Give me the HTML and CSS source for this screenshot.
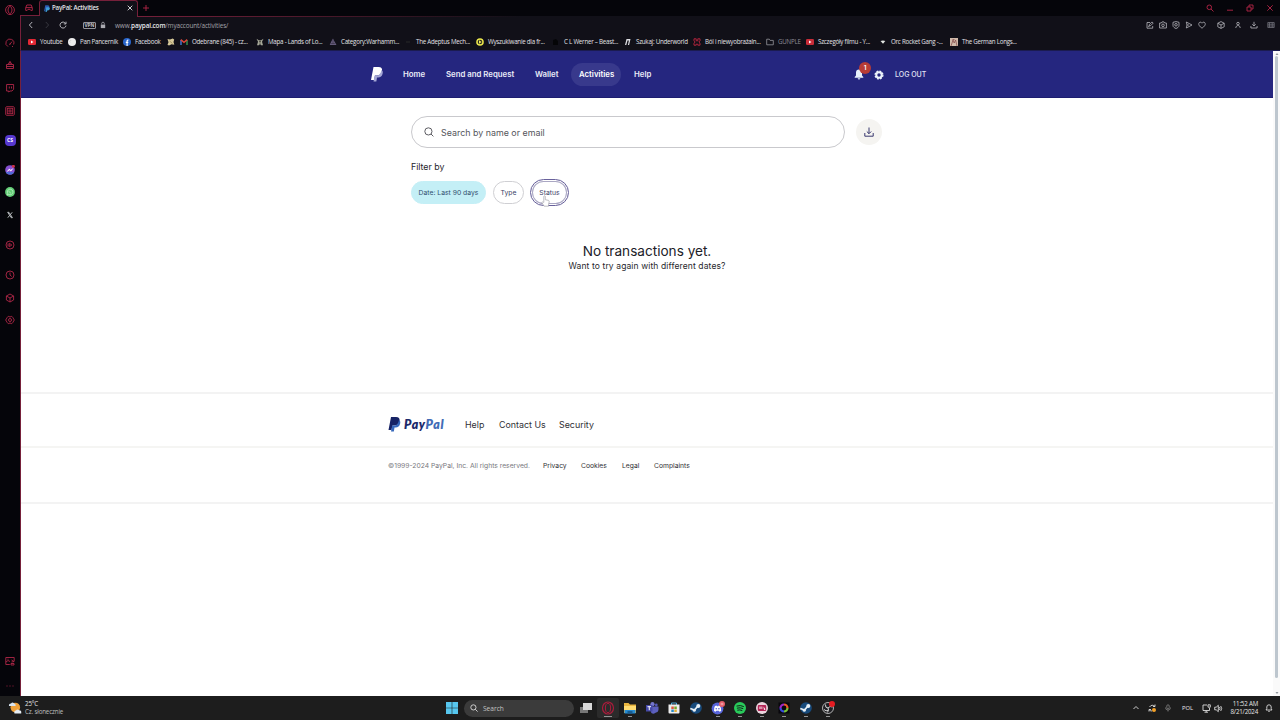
FILE: index.html
```html
<!DOCTYPE html>
<html lang="en">
<head>
    <meta charset="UTF-8">
    <meta name="viewport" content="width=device-width, initial-scale=1.0">
    <title>PayPal: Activities</title>
    <link rel="stylesheet" href="styles.css">
</head>
<body>

<div class="desktop">
    <div class="browser">
        <!-- Browser sidebar -->
        <aside class="sidebar">
            <svg viewBox="0 0 10 10"><ellipse cx="5" cy="5" rx="4.4" ry="4.6"/><ellipse cx="5" cy="5" rx="2" ry="3.5"/></svg>
            <svg viewBox="0 0 10 10"><path d="M3 8.6A4 4 0 1 1 8.6 6.5M5 6.2L7 3.6M4 6.2h1.6M7 8.5h1"/></svg>
            <svg viewBox="0 0 10 10"><path d="M1.5 4.5h7v4h-7zM3 4.5l2-3 2 3M1.5 6.5h7M5 1.5v3"/></svg>
            <svg viewBox="0 0 10 10"><path d="M1.6 1.5h7v4.8L7 8H5L3.7 9V8H1.6zM4.3 3.5v2M6.5 3.5v2"/></svg>
            <svg viewBox="0 0 10 10"><rect x=".7" y=".7" width="8.6" height="8.6" rx="1"/><rect x="2.3" y="2.3" width="5.4" height="5.4"/><rect x="4" y="4" width="2" height="2"/></svg>
            <span class="cs-badge">CS</span>
            <svg class="fill" viewBox="0 0 10 10"><circle cx="5" cy="5" r="4.8" fill="#8750d2"/><path d="M.8 7A4.8 4.8 0 0 0 9 7.3z" fill="#496ed8"/><path d="M2.3 6.4L4.2 4l1.6 1.2L7.7 3.7 6 6.1 4.4 5z" stroke="#fff" stroke-width=".5" fill="#fff"/><circle cx="8.4" cy="1.3" r="1.5" fill="#ce3349"/></svg>
            <svg class="fill" viewBox="0 0 10 10"><circle cx="5" cy="5" r="4.9" fill="#64cf77"/><path d="M2.2 8l.5-1.6a2.8 2.8 0 1 1 1 1z" fill="none" stroke="#c4efcb" stroke-width=".7"/><path d="M3.9 3.9c.1 1.1 1 2 2.1 2.2" fill="none" stroke="#c4efcb" stroke-width=".7"/></svg>
            <svg class="fill" viewBox="0 0 10 10"><rect width="10" height="10" rx="1.5" fill="#050608"/><path d="M2.7 2.3h1.2l3.5 5.4H6.2zM7.2 2.3L5.4 4.5M4.5 5.5L2.8 7.7" fill="none" stroke="#e1e5e8" stroke-width=".8"/></svg>
            <svg viewBox="0 0 10 10"><circle cx="5" cy="5" r="4"/><path d="M4.3 3.3L6.8 5 4.3 6.7zM3 3.5v3"/></svg>
            <svg viewBox="0 0 10 10"><circle cx="5" cy="5" r="4"/><path d="M5 2.5V5l1.7 1.5"/></svg>
            <svg viewBox="0 0 10 10"><path d="M5 1l3.6 2v4L5 9 1.4 7V3zM1.4 3L5 5l3.6-2M5 5v4"/></svg>
            <svg viewBox="0 0 10 10"><path d="M3.3 1.3L5 2l1.7-.7 1.1 1.2 1.5 2.5-1.5 2.5-1.1 1.2L5 8l-1.7.7-1.1-1.200L.7 5l1.500-2.500z"/><circle cx="5" cy="5" r="1.5"/></svg>
            <svg viewBox="0 0 10 10"><path d="M.8 1.5h8.4v4M.8 1.5v7h4M1 6l2-1.500 2 1M2.500 3.200h1M6.500 4L9 5.600 6.500 6M6 7.500h3v1.500H6z"/></svg>
            <svg viewBox="0 0 10 10"><path d="M1.500 5h1M4.500 5h1M7.500 5h1"/></svg>
        </aside>

        <div class="window">
            <!-- Tab strip -->
            <div class="tab-strip">
                <div class="tab-group">
                    <svg class="pink" viewBox="0 0 8 8"><path d="M1.8 1h4.4l1.1 2.8v2.6H5.8L5 5.3H3l-.8 1.1H.7V3.8zM.8 3.6h6.4"/></svg>
                </div>
                <div class="tab">
                    <svg class="tab-logo" viewBox="0 0 24 28"><path d="M5 1h10c5 0 7 3 6 8s-5 8-10 8H7L5 25H0z" fill="#2c5bb0"/><path d="M9 9h11c3 1 4 4 3 7s-4 6-8 6h-3l-1 6H6z" fill="#3e9ed7"/></svg>
                    <span class="tab-title">PayPal: Activities</span>
                    <svg class="tab-close" viewBox="0 0 8 8"><path d="M1.7 1.7l4.6 4.6M6.3 1.7L1.7 6.3"/></svg>
                </div>
                <svg class="new-tab pink" viewBox="0 0 8 8"><path d="M4 1v6M1 4h6"/></svg>
                <div class="window-buttons">
                    <svg class="pink" viewBox="0 0 8 8"><circle cx="3.3" cy="3.3" r="2.3"/><path d="M5 5l2.5 2.5"/></svg>
                    <svg class="pink" viewBox="0 0 8 8"><path d="M1 6.2h6"/></svg>
                    <svg class="pink" viewBox="0 0 8 8"><path d="M1 3h4v4H1zM3 3V1h4v4H5"/></svg>
                    <svg class="pink" viewBox="0 0 8 8"><path d="M1.3 1.3l5.4 5.4M6.7 1.3L1.3 6.7"/></svg>
                </div>
            </div>

            <!-- Address bar -->
            <div class="address-bar">
                <svg class="nav" viewBox="0 0 8 8"><path d="M5.2 1L2.4 4l2.8 3"/></svg>
                <svg class="nav dim" viewBox="0 0 8 8"><path d="M2.8 1l2.8 3-2.8 3"/></svg>
                <svg class="nav reload" viewBox="0 0 8 8"><path d="M6.6 2.5A3 3 0 1 0 7 4.6M7 .7v2.2H4.8"/></svg>
                <span class="vpn">VPN</span>
                <svg class="lock" viewBox="0 0 6 8"><path d="M.8 3.6h4.4v3.5H.8z" fill="#aaaab0"/><path d="M1.7 3.5v-1a1.3 1.3 0 0 1 2.6 0v1" fill="none" stroke="#aaaab0" stroke-width=".8"/></svg>
                <span class="url">www.<b>paypal.com</b>/myaccount/activities/</span>
                <div class="toolbar">
                    <svg viewBox="0 0 8 8"><path d="M4 1.5H1v5.7h5.7V5M3 5l.5-1.6L6 .9l1.2 1.2-2.5 2.5zM2.2 6l1-1"/></svg>
                    <svg viewBox="0 0 8 8"><path d="M.6 2h1.7L3 .9h2L5.7 2h1.7v5H.6z"/><circle cx="4" cy="4.3" r="1.3"/></svg>
                    <svg viewBox="0 0 8 8"><path d="M1 1.3l3-.7 3 .7v3.3C7 6 5.4 7 4 7.5 2.6 7 1 6 1 4.6z"/><circle cx="4" cy="3.8" r="1.3"/></svg>
                    <svg viewBox="0 0 8 8"><path d="M1.3 1L7 4 1.3 7l.7-3zM2 4h2"/></svg>
                    <svg viewBox="0 0 8 8"><path d="M4 7.2C1.5 5.4.5 4 .8 2.5 1.2.8 3.2.7 4 2.2 4.8.7 6.8.8 7.2 2.5 7.5 4 6.5 5.4 4 7.2z"/></svg>
                    <svg viewBox="0 0 8 8"><path d="M4 .6l3.2 1.6v3.6L4 7.4.8 5.8V2.2zM.8 2.2L4 4l3.2-1.8M4 4v3.4"/></svg>
                    <svg viewBox="0 0 8 8"><circle cx="4" cy="2.6" r="1.3"/><path d="M1.8 7c.1-3.3 4.3-3.3 4.4 0"/></svg>
                    <svg viewBox="0 0 8 8"><path d="M4 .8v4M2.3 3.3L4 5l1.7-1.7M.9 5v2h6.2V5"/></svg>
                    <svg class="dim" viewBox="0 0 8 8"><path d="M.8 1.5h6.4v5H.8zM2.5 1.5v5M.8 3.2h6.4M.8 5h6.4M5.2 1.5v5"/></svg>
                </div>
            </div>

            <!-- Bookmarks -->
            <div class="bookmarks">
                <div class="bookmark"><svg viewBox="0 0 8 8"><rect y="1" width="8" height="6" rx="1.3" fill="#e22834"/><path d="M3 2.5L5.5 4 3 5.5z" fill="#fff"/></svg><span>Youtube</span></div>
                <div class="bookmark"><svg viewBox="0 0 8 8"><circle cx="4" cy="4" r="4" fill="#ececec"/><path d="M2 1.8l1 1M1.5 3.5l1 .6" stroke="#aaa" stroke-width=".5"/></svg><span>Pan Pancernik</span></div>
                <div class="bookmark"><svg viewBox="0 0 8 8"><circle cx="4" cy="4" r="4" fill="#2865cb"/><path d="M4.1 8V3q0-1 1.3-.9M2.8 4.4h2.5" fill="none" stroke="#fff" stroke-width="1.1"/></svg><span>Facebook</span></div>
                <div class="bookmark"><svg viewBox="0 0 8 8"><path d="M.5 1l2.5.6L5.7.5l1.500 1L6.500 4l.8 2.700-2.700-.4L2 7.500.5 6.700l1-2.500z" fill="#d6c899"/><path d="M2.500 3l3 2.500" stroke="#75602e" stroke-width=".5"/></svg></div>
                <div class="bookmark"><svg viewBox="0 0 8 8"><path d="M1 7V2" stroke="#4b83e5" stroke-width="1.3"/><path d="M7 7V2" stroke="#38a455" stroke-width="1.3"/><path d="M.8 1.6L4 4.3l3.2-2.7" fill="none" stroke="#df4639" stroke-width="1.4"/></svg><span>Odebrane (845) - cz...</span></div>
                <div class="bookmark"><svg viewBox="0 0 8 8"><path d="M.5.7l2.4 1.6h2.2L7.5.7 6 3.7l1 3.5H5L4 6 3 7.2H1l1-3.5z" fill="#a6a898"/><path d="M3 3.5h2M4 2.5v4" stroke="#24251f" stroke-width=".5"/></svg><span>Mapa - Lands of Lo...</span></div>
                <div class="bookmark"><svg viewBox="0 0 8 8"><path d="M4 .6l1.2 2.3L7.5 7H.7l1.8-4z" fill="#655b7a"/><path d="M4 2v4M2 5.5h4" stroke="#312b3e" stroke-width=".5"/></svg><span>Category:Warhamm...</span></div>
                <div class="bookmark"><svg viewBox="0 0 8 8"><path d="M2 4h4" stroke="#1c1c20" stroke-width="2"/></svg><span>The Adeptus Mech...</span></div>
                <div class="bookmark"><svg viewBox="0 0 8 8"><circle cx="4" cy="4" r="3.8" fill="#ece84c"/><circle cx="4" cy="4" r="2.3" fill="#26241d"/><path d="M3 2.2L5.700 4 3 5.800z" fill="#f0ec62"/></svg><span>Wyszukiwanie dla fr...</span></div>
                <div class="bookmark"><svg viewBox="0 0 8 8"><path d="M1 2l3-1 2 2v4H1z" fill="#050507"/></svg><span>C L Werner – Beast...</span></div>
                <div class="bookmark"><svg viewBox="0 0 8 8"><path d="M1 7L2.500 1h4L5.100 7H3.900l1-4.500H3.500L2.300 7z" fill="#dedee2"/></svg><span>Szukaj: Underworld</span></div>
                <div class="bookmark"><svg viewBox="0 0 8 8"><path d="M1 .8h2.2v2h1.6v-2H7v2L5.8 4 7 5.2v2H4.8v-1H3.2v1H1v-2L2.2 4 1 2.800z" fill="none" stroke="#af243c"/></svg><span>Ból i niewyobrażaln...</span></div>
                <div class="bookmark folder"><svg viewBox="0 0 8 8"><path d="M.7 6.8V1.2h2.6l.8 1.2h3.2v4.4z" fill="none" stroke="#96969c" stroke-width=".8"/></svg><span>GUNPLE</span></div>
                <div class="bookmark"><svg viewBox="0 0 8 8"><rect y="1" width="8" height="6" rx="1.3" fill="#c92c38"/><path d="M3 2.5L5.5 4 3 5.5z" fill="#fff"/></svg><span>Szczegóły filmu - Y...</span></div>
                <div class="bookmark"><svg viewBox="0 0 8 8"><path d="M1.5 3Q4 1.8 6.3 3L4 5.8z" fill="#e3e7e3"/></svg><span>Orc Rocket Gang -...</span></div>
                <div class="bookmark"><svg viewBox="0 0 8 8"><path d="M0 0h8v8H0z" fill="#cfb9aa"/><path d="M1 8l2-6 1.2 3L5.6 2 7 8M2.5 1.5h2" fill="none" stroke="#7f4545" stroke-width=".7"/></svg><span>The German Longs...</span></div>
            </div>

            <!-- PayPal page -->
            <div class="viewport">
                <div class="page">
                    <header class="site-header">
                        <svg class="logo-mark" viewBox="0 0 24 30"><path d="M5 0h10c5.5 0 8 3 7 8-1 6-5 9-11 9H8L6 26H0z" fill="#fff"/><path d="M21 6c3 2 3 5 2 8-1 4-4 7-9 7h-2l-1.3 8H5l2.4-12h4.2c5 0 8.4-4 9.4-11z" fill="#a4a6d5"/></svg>
                        <nav class="main-nav">
                            <a class="nav-home">Home</a>
                            <a class="nav-send">Send and Request</a>
                            <a class="nav-wallet">Wallet</a>
                            <a class="nav-activities">Activities</a>
                            <a class="nav-help">Help</a>
                        </nav>
                        <div class="bell">
                            <svg viewBox="0 0 10 11"><path d="M5 .5a3 3 0 0 0-3 3v3L.7 8v.8h8.6V8L8 6.5v-3a3 3 0 0 0-3-3zM3.7 9.3h2.6a1.3 1.2 0 0 1-2.6 0z" fill="#e6f0fb"/></svg>
                            <span class="count">1</span>
                        </div>
                        <svg class="gear" viewBox="0 0 10 10"><circle cx="5" cy="5" r="2.7" fill="none" stroke="#ecf3fb" stroke-width="2"/><circle cx="5" cy="5" r="3.9" fill="none" stroke="#ecf3fb" stroke-width="1.3" stroke-dasharray="1.9 1.16"/></svg>
                        <a class="logout">LOG OUT</a>
                    </header>

                    <main class="activities">
                        <div class="search-row">
                            <div class="search-box">
                                <svg viewBox="0 0 10 10"><circle cx="4.4" cy="4.4" r="3.6"/><path d="M7 7l2.4 2.4"/></svg>
                                <span>Search by name or email</span>
                            </div>
                            <div class="download">
                                <svg viewBox="0 0 10 10"><path d="M5 .5v6M2.8 4.500L5 6.700l2.200-2.200M.8 6v3.200h8.400V6"/></svg>
                            </div>
                        </div>
                        <div class="filter-label">Filter by</div>
                        <div class="filters">
                            <span class="chip chip-date">Date: Last 90 days</span>
                            <span class="chip chip-type">Type</span>
                            <span class="chip chip-status">Status
                                <svg class="cursor" viewBox="0 0 9 12"><path d="M2.8 7V1.3q.8-1 1.500 0v3.400l3.200.7q.8.3.7 1.200L7.500 10v1.200H3.200L.8 7.600q.6-1.200 2-.2z"/></svg>
                            </span>
                        </div>
                        <div class="empty">
                            <h1>No transactions yet.</h1>
                            <p>Want to try again with different dates?</p>
                        </div>
                    </main>

                    <footer class="site-footer">
                        <div class="footer-top">
                            <svg class="footer-mark" viewBox="0 0 24 30"><path d="M5 0h10c5.5 0 8 3 7 8-1 6-5 9-11 9H8L6 26H0z" fill="#172365"/><path d="M21 6c3 2 3 5 2 8-1 4-4 7-9 7h-2l-1.3 8H5l2.4-12h4.2c5 0 8.4-4 9.4-11z" fill="#3768bb"/></svg>
                            <span class="wordmark">Pay<i>Pal</i></span>
                            <a class="f-help">Help</a>
                            <a class="f-contact">Contact Us</a>
                            <a class="f-security">Security</a>
                        </div>
                        <div class="footer-bottom">
                            <span class="copyright">©1999-2024 PayPal, Inc. All rights reserved.</span>
                            <a class="f-privacy">Privacy</a>
                            <a class="f-cookies">Cookies</a>
                            <a class="f-legal">Legal</a>
                            <a class="f-complaints">Complaints</a>
                        </div>
                    </footer>
                </div>
                <div class="scrollbar">
                    <svg viewBox="0 0 6 4"><path d="M1.5 3L3 1l1.5 2z"/></svg>
                    <div class="thumb"></div>
                    <svg viewBox="0 0 6 4"><path d="M1.5 1L3 3l1.5-2z"/></svg>
                </div>
            </div>
        </div>
    </div>

    <!-- Windows taskbar -->
    <div class="taskbar">
        <div class="weather">
            <svg viewBox="0 0 14 14"><circle cx="7.3" cy="6.5" r="4.8" fill="#f0a23a"/><path d="M1 5q-.5-2.5 2-2.6Q4.5.4 6.2 2.6 8 3 7.6 5z" fill="#d9e5f0"/><path d="M6.5 12.5q-1-2.6 1.5-2.900 1.200-2.200 3.200-.3 2.600.1 2 3.200z" fill="#e6edf4"/></svg>
            <div class="weather-text"><span>25°C</span><span class="muted">Cz. słonecznie</span></div>
        </div>
        <div class="apps">
            <svg class="start" viewBox="0 0 12 12"><path d="M0 0h5.7v5.7H0zM6.3 0H12v5.7H6.3zM0 6.3h5.7V12H0zM6.3 6.3H12V12H6.3z" fill="#57c7ef"/></svg>
            <div class="task-search">
                <svg viewBox="0 0 8 8"><circle cx="3.4" cy="3.4" r="2.6"/><path d="M5.3 5.3l2.3 2.3"/></svg>
                <span>Search</span>
            </div>
            <div class="app"><svg viewBox="0 0 14 14"><path d="M1 6h8v6H1z" fill="#777"/><path d="M4 2h9v7H4z" fill="#d9d9d9"/></svg></div>
            <div class="app current"><svg viewBox="0 0 14 14"><ellipse cx="7" cy="7" rx="5.5" ry="6" fill="none" stroke="#a91c3b" stroke-width="1.2"/><ellipse cx="7" cy="7" rx="2.6" ry="4.6" fill="none" stroke="#a91c3b"/></svg></div>
            <div class="app open"><svg viewBox="0 0 14 14"><path d="M1 2h4.5L7 3.5h6V12H1z" fill="#e9b53f"/><path d="M1 5h12v4H1z" fill="#ffdc72"/><path d="M1.5 9h11v3.5h-11z" fill="#268bd2"/><path d="M4.5 10h5v2.5h-5z" fill="#195c91"/></svg></div>
            <div class="app"><svg viewBox="0 0 14 14"><circle cx="7.5" cy="3.2" r="2.1" fill="#7476ce"/><circle cx="11.3" cy="4" r="1.4" fill="#5559b8"/><path d="M5 5.5h8.5v3q-.3 3-2.5 3Q9 13.5 6.3 12z" fill="#5c60bd"/><path d="M1 4h6.5v6.5H1z" fill="#4549a8"/><path d="M2.5 5.7H6M4.25 5.7v3.5" stroke="#fff"/></svg></div>
            <div class="app"><svg viewBox="0 0 14 14"><path d="M4.5 4V2h5v2" fill="none" stroke="#4ba9d9"/><path d="M1.5 3.5h11v8q0 1-1 1h-9q-1 0-1-1z" fill="#eee"/><path d="M4.3 5.5h2.5V8H4.3z" fill="#dd563b"/><path d="M7.3 5.5h2.5V8H7.3z" fill="#73aa2e"/><path d="M4.3 8.5h2.5V11H4.3z" fill="#298bc8"/><path d="M7.3 8.5h2.5V11H7.3z" fill="#e4ad34"/></svg></div>
            <div class="app"><svg viewBox="0 0 14 14"><circle cx="7" cy="7" r="5.8" fill="#174a7b"/><path d="M1.3 7.5L5.5 9l3-3.5" fill="none" stroke="#e8f0f6" stroke-width="1.8"/><circle cx="9.3" cy="5" r="2" fill="#e8f0f6"/><circle cx="5.3" cy="9.3" r="1.5" fill="#e8f0f6"/></svg></div>
            <div class="app open"><svg viewBox="0 0 14 14"><circle cx="6.5" cy="7.5" r="5.9" fill="#5865da"/><path d="M3 10q0-4 1-5l1.5-.5.5.8h1.2l.5-.8L9 5q1.200 1.500 1.200 5l-1.700.7-.7-1H5.300l-.7 1z" fill="#fff"/><circle cx="5.3" cy="7.8" r=".8" fill="#5865da"/><circle cx="7.9" cy="7.8" r=".8" fill="#5865da"/><circle cx="11" cy="3" r="3" fill="#e45d69"/><path d="M9.5 3h3M11 1.7v2.6" stroke="#f5b7bd" stroke-width=".8"/></svg></div>
            <div class="app open"><svg viewBox="0 0 14 14"><circle cx="7" cy="7" r="6" fill="#29cb5b"/><path d="M3.5 5.1q4-1.3 7.3.5M3.9 7.2q3.4-1 6.3.4M4.3 9.2q2.6-.8 5 .4" fill="none" stroke="#122119"/></svg></div>
            <div class="app open"><svg viewBox="0 0 14 14"><circle cx="7" cy="7" r="6" fill="#ead6de"/><rect x="2.8" y="4" width="8.4" height="6" rx="1" fill="#b42455"/><path d="M4 5.5h3.500V8H4z" fill="#d890aa"/><path d="M8.500 5.500l2 3-1.500.5z" fill="#fff"/></svg></div>
            <div class="app open"><svg viewBox="0 0 14 14"><path d="M1.5 1.5h11v11h-11z" fill="#08070c"/><path d="M7 3.500A3.500 3.500 0 0 1 10.500 7" fill="none" stroke="#e85b28" stroke-width="2.2"/><path d="M10.500 7A3.500 3.500 0 0 1 7 10.500" fill="none" stroke="#79bf35" stroke-width="2.2"/><path d="M7 10.500A3.500 3.500 0 0 1 3.500 7" fill="none" stroke="#374bdd" stroke-width="2.2"/><path d="M3.500 7A3.500 3.500 0 0 1 7 3.500" fill="none" stroke="#a026c0" stroke-width="2.2"/></svg></div>
            <div class="app open"><svg viewBox="0 0 14 14"><circle cx="7" cy="7" r="5.8" fill="#174a7b"/><path d="M1.3 7.5L5.5 9l3-3.5" fill="none" stroke="#e8f0f6" stroke-width="1.8"/><circle cx="9.3" cy="5" r="2" fill="#e8f0f6"/><circle cx="5.3" cy="9.3" r="1.5" fill="#e8f0f6"/></svg></div>
            <div class="app open"><svg viewBox="0 0 14 14"><circle cx="7" cy="7" r="5.5" fill="#202024" stroke="#d2d2d2" stroke-width=".8"/><path d="M7 7Q4 7 4.5 3.5M7 7q2-2.5 4.5-1M7 7q1.500 2.500-.7 4.500M3 8.500q2 2.200 4.200.8" fill="none" stroke="#d2d2d2"/><circle cx="11" cy="3" r="3" fill="#e51c22"/></svg></div>
        </div>
        <div class="tray">
            <svg class="caret" viewBox="0 0 8 8"><path d="M1.5 5L4 2.5 6.5 5"/></svg>
            <svg class="sync" viewBox="0 0 8 8"><path d="M7 2.5Q4-.3 1.5 3M7 .5v2H5M1 5.5Q2 7 4 7M1 7.500v-2h2"/><circle cx="6" cy="6" r="2" fill="#f3a127" stroke="none"/></svg>
            <svg class="mic" viewBox="0 0 8 8"><rect x="2.8" y=".8" width="2.4" height="4" rx="1.2"/><path d="M1.5 3.5q0 2.5 2.5 2.5t2.5-2.5M4 6v1.500"/></svg>
            <span class="lang">POL</span>
            <svg class="net" viewBox="0 0 9 9"><path d="M5 1H1v5.5h6.5V4M2.5 8.2H6M4.2 6.5v1.7M6 .8h2.3v2.4H6z"/></svg>
            <svg class="vol" viewBox="0 0 9 9"><path d="M.7 3.2h1.5l2.100-1.900v6.400L2.200 5.800H.7zM5.500 3q1 1.500 0 3M6.700 2q2 2.500 0 5"/></svg>
            <div class="clock"><span>11:52 AM</span><span>8/21/2024</span></div>
            <svg class="notify" viewBox="0 0 8 8"><path d="M1 6l.8-1.3V3a2.200 2.200 0 0 1 4.400 0v1.700L7 6zM3.200 7.300h1.600"/></svg>
        </div>
    </div>
</div>

</body>
</html>
```
FILE: styles.css
```css
:root {
    --chrome-bg: #111018;
    --dark: #05050a;
    --pink: #b52647;
    --line: #76203a;
    --navy: #25267f;
    --page-font: Inter, "Liberation Sans", sans-serif;
    --ui-font: "Open Sans", "Noto Sans", sans-serif;
}

* {
    box-sizing: border-box;
}

body {
    margin: 0;
    background-color: #fff;
    font-family: var(--ui-font);
    overflow: hidden;
}

svg {
    display: block;
    flex: none;
}

.desktop {
    display: flex;
    flex-direction: column;
    width: 1280px;
    height: 720px;
}

.browser {
    display: flex;
    height: 696px;
}

/* Sidebar */
.sidebar {
    display: grid;
    grid-template-rows: 33px 22px 23px 23px 29px 30px 22px 23px 30px 30px 23px 22px 341px 25px 15px;
    align-content: start;
    justify-items: center;
    width: 20px;
    padding-top: 5px;
    background-color: var(--dark);
}

.sidebar svg {
    width: 10px;
    height: 10px;
    fill: none;
    stroke: #b02747;
    stroke-width: 0.9;
}

.sidebar .fill {
    stroke: none;
}

.cs-badge {
    width: 11px;
    height: 11px;
    border-radius: 4px;
    background-color: #5638cf;
    color: #fff;
    font-size: 5px;
    font-weight: 700;
    line-height: 11px;
    text-align: center;
}

.window {
    display: flex;
    flex-direction: column;
    width: 1260px;
    background-color: var(--chrome-bg);
}

/* Tab strip */
.tab-strip {
    display: flex;
    height: 16px;
    background-color: var(--dark);
}

.tab-group {
    display: flex;
    align-items: center;
    width: 19px;
    padding-left: 5px;
    border-bottom: 1px solid var(--line);
}

.pink,
.tab-close {
    width: 8px;
    height: 8px;
    fill: none;
    stroke: var(--pink);
    stroke-width: 0.9;
}

.tab {
    display: flex;
    align-items: center;
    width: 99px;
    padding: 0 3px 1px 4px;
    border: 1px solid var(--line);
    border-bottom: none;
    border-radius: 3px 3px 0 0;
    background-color: var(--chrome-bg);
}

.tab-logo {
    width: 6px;
    height: 7px;
}

.tab-title {
    width: 82px;
    margin-left: 2px;
    color: #e4e4e8;
    font-size: 6.2px;
    font-weight: 600;
    letter-spacing: -0.2px;
    line-height: 12px;
}

.tab-close {
    stroke: #e4e4e8;
}

.new-tab {
    align-self: center;
    margin-left: 4px;
}

.window-buttons {
    display: flex;
    align-items: center;
    gap: 12px;
    margin-left: auto;
    padding-right: 6px;
}

/* The line under the tab strip fades to the right */
.address-bar {
    display: flex;
    align-items: center;
    height: 18px;
    padding-left: 6px;
    border-left: 1px solid var(--line);
    background: linear-gradient(to right, transparent 116px, var(--line) 116px, #4a182a 300px, transparent 500px) 0 0 / 100% 1px no-repeat;
}

.nav {
    width: 8px;
    height: 8px;
    margin-right: 8px;
    fill: none;
    stroke: #c6c6cc;
    stroke-width: 0.9;
}

.nav.dim {
    stroke: #3b3b43;
}

.nav.reload {
    margin-right: 16px;
}

.vpn {
    width: 13px;
    height: 7px;
    border: 1px solid #93939a;
    border-radius: 1px;
    color: #c3c3c9;
    font-size: 4.8px;
    font-weight: 700;
    line-height: 5px;
    text-align: center;
}

.lock {
    width: 6px;
    height: 8px;
    margin: 0 9px 0 4px;
}

.url {
    padding-top: 1px;
    color: #a3a3aa;
    font-size: 6.4px;
    letter-spacing: -0.12px;
    line-height: 12px;
}

.url b {
    color: #e9e9ed;
    font-weight: 600;
}

.toolbar {
    display: grid;
    grid-template-columns: 13px 13px 13px 13px 19px 17px 16px 17px 10px;
    margin-left: auto;
    padding-right: 3px;
}

.toolbar svg {
    width: 8px;
    height: 8px;
    fill: none;
    stroke: #b6b6bc;
    stroke-width: 0.8;
}

.toolbar .dim {
    stroke: #707078;
}

/* Bookmarks */
.bookmarks {
    display: grid;
    grid-template-columns: 40px 55px 44px 13px 76px 73px 75px 72px 76px 72px 69px 73px 40px 73px 71px 70px;
    height: 17px;
    padding: 0 0 1px 7px;
    border-left: 1px solid var(--line);
    border-bottom: 1px solid #1b1b50;
}

.bookmark {
    display: flex;
    align-items: center;
    gap: 4px;
    color: #e2e2e6;
    font-size: 6.2px;
    font-weight: 500;
    letter-spacing: -0.24px;
    white-space: nowrap;
}

.bookmark svg {
    width: 8px;
    height: 8px;
}

.bookmark.folder {
    color: #8e8e95;
}

/* Page viewport */
.viewport {
    display: flex;
    height: 645px;
    border-left: 1px solid var(--line);
    background-color: #fff;
}

.page {
    width: 1252px;
    font-family: var(--page-font);
}

.site-header {
    display: flex;
    align-items: center;
    height: 47px;
    padding: 1px 0 0 350px;
    border-bottom: 1px solid #1d1d70;
    background-color: var(--navy);
    color: #fff;
}

.logo-mark {
    width: 12px;
    height: 15px;
    margin-right: 12px;
}

.main-nav {
    display: flex;
    align-items: center;
    width: 459px;
    font-size: 7.8px;
    font-weight: 600;
    line-height: 23px;
    color: #e9ebf8;
}

.main-nav a {
    padding: 0 8px;
    white-space: nowrap;
}

.nav-home {
    width: 43px;
}

.nav-send {
    width: 89px;
}

.nav-wallet {
    width: 44px;
}

.main-nav .nav-activities {
    width: 50px;
    margin-right: 5px;
    border-radius: 12px;
    background-color: #38398c;
    color: #fff;
}

.bell {
    position: relative;
    width: 10px;
    margin-right: 10px;
}

.bell svg {
    width: 10px;
    height: 11px;
}

.count {
    position: absolute;
    top: -7px;
    left: 5px;
    width: 12px;
    height: 12px;
    border-radius: 50%;
    background-color: #b73c36;
    font-size: 6.5px;
    font-weight: 600;
    line-height: 12px;
    text-align: center;
}

.gear {
    width: 10px;
    height: 10px;
    margin-right: 11px;
}

.logout {
    color: #e3e5f5;
    font-size: 7px;
    font-weight: 500;
    line-height: 12px;
}

.activities {
    height: 294px;
    padding: 18px 0 0 390px;
}

.search-row {
    display: flex;
    align-items: center;
    gap: 11px;
    height: 32px;
}

.search-box {
    display: flex;
    align-items: center;
    gap: 7px;
    width: 434px;
    height: 32px;
    padding-left: 12px;
    border: 1px solid #c9c9cd;
    border-radius: 16px;
    color: #55555b;
    font-size: 8.9px;
}

.search-box svg {
    width: 10px;
    height: 10px;
    fill: none;
    stroke: #4c4c52;
    stroke-width: 0.9;
}

.download {
    display: flex;
    align-items: center;
    justify-content: center;
    width: 26px;
    height: 26px;
    border-radius: 50%;
    background-color: #f5f4f1;
}

.download svg {
    width: 10px;
    height: 10px;
    fill: none;
    stroke: #39386f;
    stroke-width: 1;
}

.filter-label {
    margin-top: 12px;
    color: #24242a;
    font-size: 8.8px;
    line-height: 13px;
}

.filters {
    display: flex;
    align-items: center;
    height: 28px;
    margin-top: 5px;
    color: #3d4267;
    font-size: 6.8px;
}

.chip {
    height: 23px;
    border: 1px solid #cfcfd3;
    border-radius: 14px;
    line-height: 21px;
    text-align: center;
    white-space: nowrap;
}

.chip-date {
    width: 75px;
    margin-right: 7px;
    border-color: #c4eff6;
    background-color: #c4eff6;
    color: #31506f;
}

.chip-type {
    width: 31px;
    margin-right: 6px;
}

.chip-status {
    position: relative;
    width: 39px;
    height: 27px;
    border: 1px solid #68619b;
    box-shadow: inset 0 0 0 1px #fff, inset 0 0 0 2px #aaa7c3;
    line-height: 25px;
}

.cursor {
    position: absolute;
    top: 15px;
    left: 10px;
    width: 9px;
    height: 12px;
    fill: #fff;
    stroke: #96969e;
    stroke-width: 0.6;
}

.empty {
    width: 472px;
    margin-top: 36px;
    text-align: center;
}

.empty h1 {
    margin: 0;
    color: #202027;
    font-size: 13.6px;
    font-weight: 400;
    line-height: 18px;
}

.empty p {
    margin: 0;
    color: #27272d;
    font-size: 8.5px;
    letter-spacing: 0.12px;
    line-height: 12px;
}

/* Footer */
.site-footer {
    height: 112px;
    border-top: 2px solid #f3f3f3;
    border-bottom: 2px solid #f3f3f3;
    color: #303035;
}

.footer-top {
    display: flex;
    align-items: center;
    height: 54px;
    padding: 8px 0 0 367px;
    border-bottom: 2px solid #f5f5f3;
    font-size: 8.9px;
}

.footer-mark {
    width: 13px;
    height: 15px;
    margin-right: 3px;
}

.wordmark {
    width: 61px;
    color: #1c2a6c;
    font-family: Lato, sans-serif;
    font-size: 12.4px;
    font-style: italic;
    font-weight: 800;
    letter-spacing: 0.6px;
}

.wordmark i {
    color: #426cb6;
}

.f-help {
    width: 34px;
}

.f-contact {
    width: 60px;
}

.footer-bottom {
    display: flex;
    padding: 12px 0 0 367px;
    font-size: 6.75px;
    line-height: 12px;
}

.copyright {
    width: 155px;
    color: #78787e;
}

.f-privacy {
    width: 38px;
}

.f-cookies {
    width: 41px;
}

.f-legal {
    width: 32px;
}

.scrollbar {
    display: flex;
    flex-direction: column;
    align-items: center;
    justify-content: space-between;
    width: 7px;
    padding: 1px 0;
    background-color: #fafafa;
}

.scrollbar svg {
    width: 6px;
    height: 4px;
    fill: #8f969d;
}

.thumb {
    width: 3px;
    height: 622px;
    margin-bottom: auto;
    border-radius: 2px;
    background-color: #bdc6ce;
}

/* Taskbar */
.taskbar {
    display: grid;
    grid-template-columns: 446px 634px 200px;
    height: 24px;
    background-color: #1d1d1d;
    color: #e7e7e7;
    font-size: 6.2px;
}

.weather {
    display: flex;
    align-items: center;
    gap: 3px;
    padding-left: 8px;
}

.weather svg {
    width: 14px;
    height: 14px;
}

.weather-text,
.clock {
    display: flex;
    flex-direction: column;
    line-height: 8px;
    letter-spacing: -0.15px;
}

.muted {
    color: #bfbfbf;
}

.apps {
    display: flex;
    align-items: center;
}

.start {
    width: 12px;
    height: 12px;
    margin-right: 6px;
}

.task-search {
    display: flex;
    align-items: center;
    gap: 5px;
    width: 110px;
    height: 17px;
    margin-right: 1px;
    padding-left: 6px;
    border-radius: 9px;
    background-color: #3b3b3b;
    color: #c4c4c4;
    font-size: 6.6px;
}

.task-search svg,
.tray svg {
    width: 8px;
    height: 8px;
    fill: none;
    stroke: #dcdcdc;
    stroke-width: 0.9;
}

.app {
    display: flex;
    flex-direction: column;
    align-items: center;
    width: 22px;
    height: 20px;
    padding-top: 3px;
}

.app svg {
    width: 14px;
    height: 14px;
}

.app.open::after,
.app.current::after {
    content: "";
    width: 4px;
    height: 1px;
    margin-top: 1px;
    background-color: #949494;
}

.app.current {
    border-radius: 2px;
    background-color: #2b2b2b;
}

.app.current::after {
    width: 8px;
}

.tray {
    display: flex;
    align-items: center;
    padding-left: 52px;
}

.tray .caret {
    margin-right: 8px;
}

.tray .sync {
    margin-right: 8px;
}

.tray .mic {
    margin-right: 10px;
    stroke: #777;
}

.lang {
    width: 20px;
    font-size: 5.8px;
}

.tray .net,
.tray .vol {
    width: 9px;
    height: 9px;
    margin-right: 3px;
}

.clock {
    width: 32px;
    text-align: right;
    letter-spacing: -0.2px;
}

.tray .notify {
    margin-left: 7px;
}
```
